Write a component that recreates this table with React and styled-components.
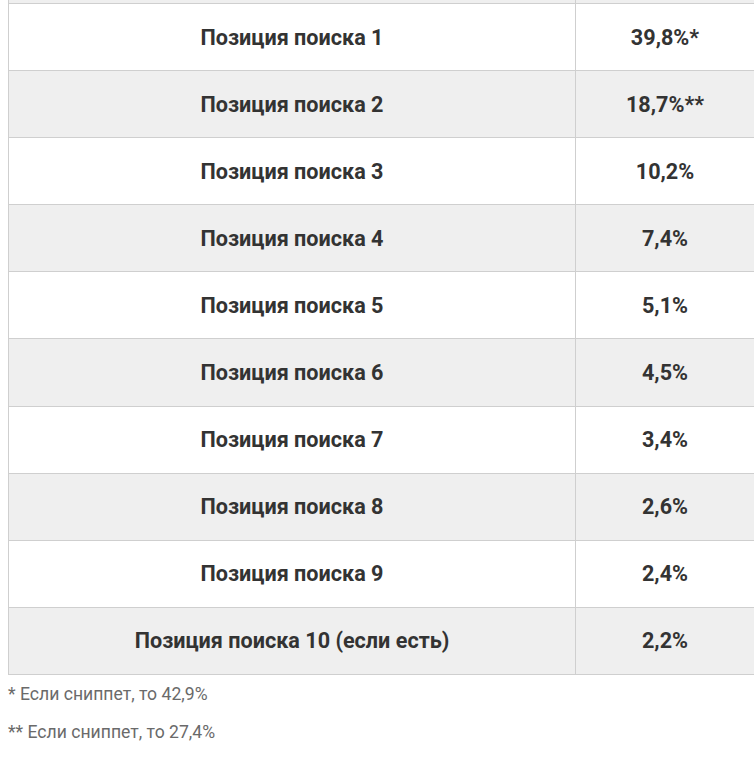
import React from "react";
import styled, { createGlobalStyle } from "styled-components";

const Global = createGlobalStyle`
  html, body { margin: 0; padding: 0; background: #fff; overflow: hidden; }
  body { font-family: Roboto, "Liberation Sans", sans-serif; }
`;

const Page = styled.div`
  padding-left: 8px;
  width: 747px;
`;

const Table = styled.table`
  width: 100%;
  border-collapse: collapse;
  table-layout: fixed;
  border-left: 1px solid #cfcfcf;
  border-right: 1px solid #cfcfcf;
`;

const Row = styled.tr`
  background: ${(p) => (p.$shaded ? "#efefef" : "#ffffff")};
`;

const Strip = styled.tr`
  background: #efefef;
  height: 3px;
  td { padding: 0; height: 3px; border-top: none; }
`;

const Cell = styled.td`
  height: 66.1px;
  padding: 0;
  text-align: center;
  vertical-align: middle;
  font-size: 21.6px;
  font-weight: 700;
  color: #333333;
  border-top: 1px solid #cfcfcf;
  border-bottom: 1px solid #cfcfcf;
  border-right: 1px solid #cfcfcf;
  &:last-child { border-right: none; }
`;

const Note = styled.p`
  margin: 0;
  font-size: 17.6px;
  color: #6a6a6a;
  line-height: 20px;
`;

const Notes = styled.div`
  display: flex;
  flex-direction: column;
  gap: 18px;
  padding-top: 9px;
`;

const rows = [
  ["Позиция поиска 1", "39,8%*"],
  ["Позиция поиска 2", "18,7%**"],
  ["Позиция поиска 3", "10,2%"],
  ["Позиция поиска 4", "7,4%"],
  ["Позиция поиска 5", "5,1%"],
  ["Позиция поиска 6", "4,5%"],
  ["Позиция поиска 7", "3,4%"],
  ["Позиция поиска 8", "2,6%"],
  ["Позиция поиска 9", "2,4%"],
  ["Позиция поиска 10 (если есть)", "2,2%"],
];

export default function App() {
  return (
    <Page>
      <Global />
      <Table>
        <colgroup>
          <col style={{ width: "567px" }} />
          <col />
        </colgroup>
        <tbody>
          <Strip>
            <td />
            <td style={{ borderLeft: "1px solid #cfcfcf" }} />
          </Strip>
          {rows.map(([a, b], i) => (
            <Row key={a} $shaded={i % 2 === 1}>
              <Cell>{a}</Cell>
              <Cell>{b}</Cell>
            </Row>
          ))}
        </tbody>
      </Table>
      <Notes>
        <Note>* Если сниппет, то 42,9%</Note>
        <Note>** Если сниппет, то 27,4%</Note>
      </Notes>
    </Page>
  );
}
